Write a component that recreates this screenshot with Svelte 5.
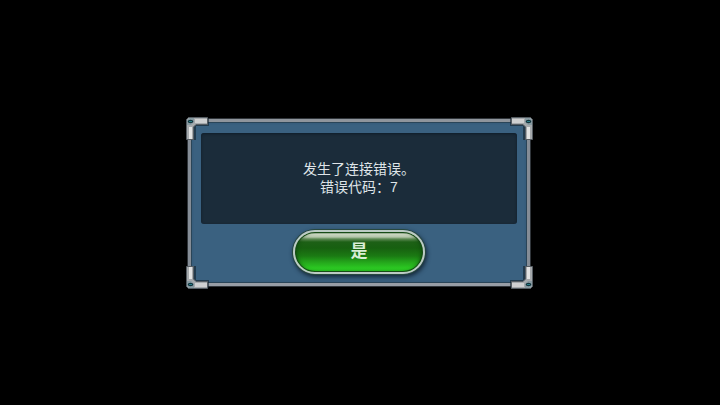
<script>
  let open = $state(true);
  const code = 7;
  const corners = ['tl', 'tr', 'bl', 'br'];
</script>

<main>
  {#if open}
    <div class="dialog" role="alertdialog" aria-modal="true" aria-describedby="message">
      <p id="message" class="message">发生了连接错误。<br />错误代码：{code}</p>
      <button type="button" class="confirm" onclick={() => (open = false)}>是</button>

      {#each corners as corner}
        <svg class="corner {corner}" viewBox="0 0 24 24" width="24" height="24" aria-hidden="true">
          <path d="M3 1H23V9H10V23H2V3Z" fill="#10202c" opacity="0.6" />
          <path d="M2.500 0.500H21.500V7.500H10L7.500 10V22.500H0.500V2.500Z" fill="#a5a9ac" stroke="#565d63" />
          <path d="M9 2H21V6H9Z" fill="#cfd0d1" />
          <path d="M3 10H6V22H3Z" fill="#e2e3e3" />
          <path d="M3 1H8V5L5 8H1V3Z" fill="#879aa1" />
          <ellipse cx="4.500" cy="4.500" rx="2.800" ry="1.800" fill="#12343d" />
          <path d="M3 4.500H6" stroke="#2b7c86" />
        </svg>
      {/each}
    </div>
  {/if}
</main>

<style>
  :global(body) {
    margin: 0;
    background: #000;
  }

  main {
    box-sizing: border-box;
    display: flex;
    align-items: center;
    justify-content: center;
    min-height: 100vh;
    padding-right: 2px;
    font-family: "Liberation Sans", "Noto Sans CJK SC", sans-serif;
  }

  .dialog {
    position: relative;
    box-sizing: border-box;
    display: flex;
    flex-direction: column;
    align-items: center;
    gap: 6px;
    width: min(342px, 100% - 32px);
    padding: 11px 10px 9px;
    border: 3px solid;
    border-color: #8f959c #858d96 #979da5 #858d96;
    border-radius: 3px;
    background: #3a6180;
    box-shadow:
      inset 0 0 0 1px #2a4558,
      inset 0 0 3px #2a4a64,
      0 0 0 1px #30353a;
  }

  .message {
    box-sizing: border-box;
    width: 100%;
    margin: 0;
    padding: 27px 12px 28px;
    border-radius: 3px;
    background: #1b2c3a;
    box-shadow: inset 0 1px 3px #0f1d29;
    color: #dfe4e8;
    font-size: 14px;
    line-height: 18px;
    text-align: center;
  }

  .confirm {
    box-sizing: border-box;
    width: 132px;
    height: 44px;
    padding: 0 0 1px;
    border: 2px solid #bccbc4;
    border-radius: 22px;
    background:
      linear-gradient(
        to bottom,
        #1d4a1a 0,
        #ccd7c3 2px,
        #b4c6aa 5px,
        #5d8953 7px,
        #1d6016 10px,
        #176010 16px,
        #1b7a13 24px,
        #24a51b 30px,
        #2bc822 36px,
        #26b51e 40px
      );
    box-shadow:
      inset 0 0 0 1px #174c16,
      inset 4px 0 4px -3px #0b430b,
      inset -4px 0 4px -3px #0b430b,
      0 0 0 1px #28483f,
      1px 2px 4px 1px #142838;
    color: #d9eed6;
    font-family: inherit;
    font-size: 17px;
    font-weight: 700;
    line-height: 24px;
    cursor: pointer;
  }

  .confirm:active {
    filter: brightness(0.85);
  }

  .corner {
    position: absolute;
  }

  .tl {
    top: -5px;
    left: -5px;
  }

  .tr {
    top: -5px;
    right: -6px;
    transform: scaleX(-1);
  }

  .bl {
    bottom: -6px;
    left: -5px;
    transform: scaleY(-1);
  }

  .br {
    right: -6px;
    bottom: -6px;
    transform: scale(-1);
  }
</style>
